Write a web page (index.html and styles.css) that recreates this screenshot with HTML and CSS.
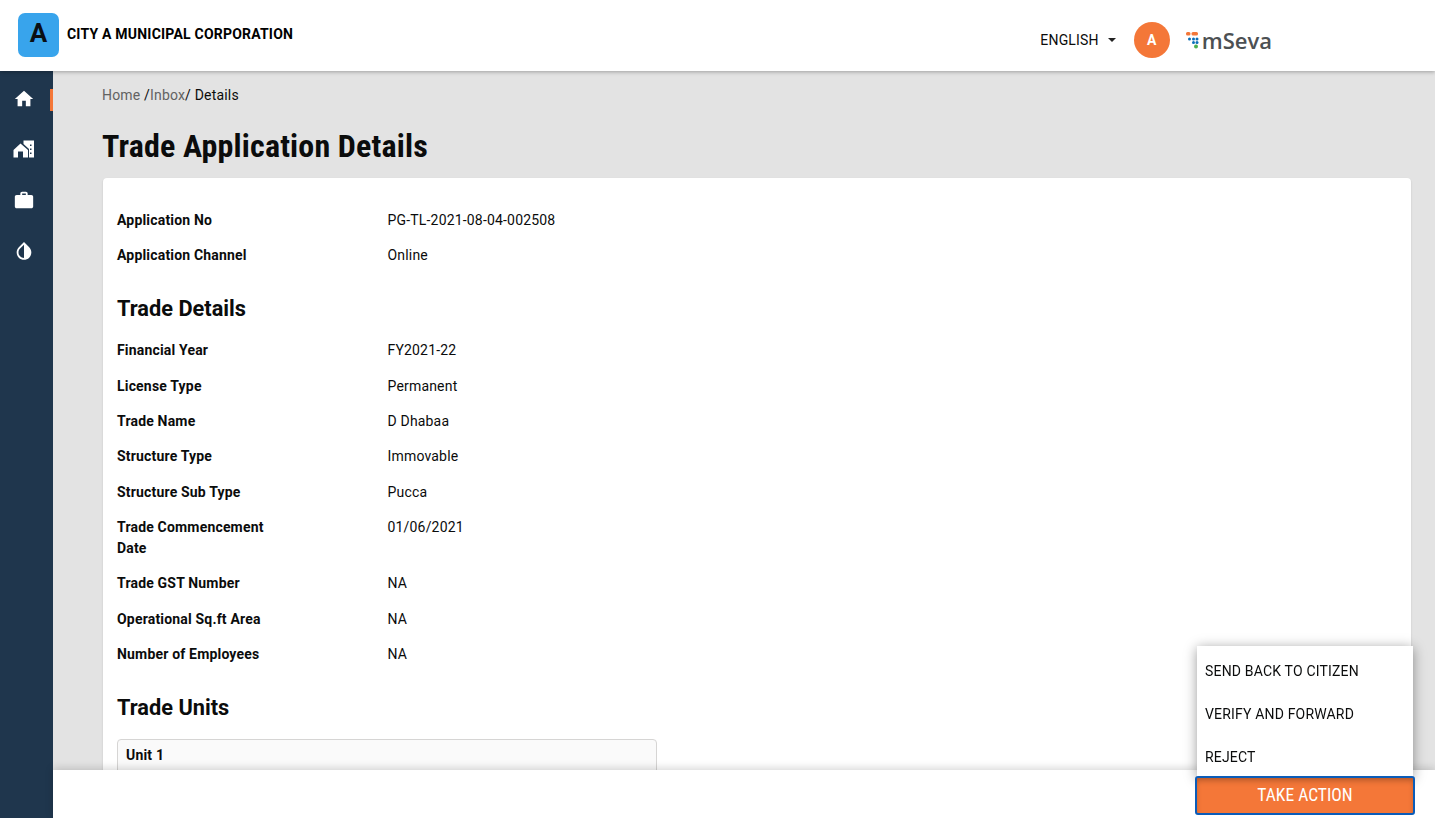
FILE: index.html
```html
<!DOCTYPE html>
<html lang="en">
<head>
<meta charset="utf-8">
<title>Trade Application Details</title>
<link rel="stylesheet" href="styles.css">
</head>
<body>
<header class="topbar">
  <div class="brand">
    <div class="logo">A</div>
    <div class="city">CITY A MUNICIPAL CORPORATION</div>
  </div>
  <div class="top-right">
    <div class="lang">ENGLISH<span class="caret"></span></div>
    <div class="avatar">A</div>
    <div class="mseva">
      <svg class="mseva-mark" viewBox="0 0 14 18" width="14" height="18">
        <rect x="1" y="1" width="4.500" height="3.500" rx="1.500" fill="#f47738"/>
        <rect x="6.500" y="1" width="6.500" height="3.500" rx="1.500" fill="#f47738"/>
        <circle cx="4.500" cy="8" r="1.500" fill="#0b6fb8"/>
        <circle cx="8.500" cy="8" r="1.500" fill="#0b6fb8"/>
        <circle cx="12" cy="8" r="1.500" fill="#0b6fb8"/>
        <circle cx="8.500" cy="11.500" r="1.500" fill="#0b6fb8"/>
        <circle cx="12" cy="11.500" r="1.500" fill="#0b6fb8"/>
        <circle cx="11" cy="15.500" r="2" fill="#4caf50"/>
      </svg>
      <span class="mseva-text">mSeva</span>
    </div>
  </div>
</header>
<div class="shell">
  <nav class="sidebar">
    <div class="nav-item active">
      <svg viewBox="0 0 24 24" width="22" height="22"><path fill="#fff" d="M10 20v-6h4v6h5v-8h3L12 3 2 12h3v8z"/></svg>
    </div>
    <div class="nav-item">
      <svg viewBox="0 0 22 22" width="22" height="22"><path fill="#fff" fill-rule="evenodd" d="M.5 18.500V11L7.500 4.500 15 11v7.500H10V12.500H5V18.500zM10.500 1.500H21V18.500H16V10L10.500 5zM17 5.500h1.500V7H17zM17 9.500h1.500V11H17zM17 13.500h1.500V15H17z"/></svg>
    </div>
    <div class="nav-item">
      <svg viewBox="0 0 24 24" width="22" height="22"><path fill="#fff" d="M20 6.500h-4V5c0-1.100-.9-2-2-2h-4c-1.100 0-2 .9-2 2v1.500H4c-1.100 0-2 .9-2 2V19c0 1.100.9 2 2 2h16c1.100 0 2-.9 2-2V8.500c0-1.100-.9-2-2-2zm-6 0h-4V5h4z"/></svg>
    </div>
    <div class="nav-item">
      <svg viewBox="0 0 24 24" width="22" height="22"><path fill="#fff" d="M17.660 7.930 12 2.270 6.340 7.930c-3.120 3.120-3.120 8.190 0 11.310C7.900 20.800 9.950 21.580 12 21.580c2.050 0 4.100-.78 5.660-2.340 3.120-3.120 3.120-8.190 0-11.310zM12 19.590c-1.600 0-3.110-.62-4.240-1.760C6.620 16.690 6 15.190 6 13.590s.62-3.110 1.760-4.240L12 5.100v14.490z"/></svg>
    </div>
  </nav>
  <main class="content">
    <div class="crumbs"><span class="crumb-link">Home</span> /<span class="crumb-link">Inbox</span>/ Details</div>
    <h1 class="title">Trade Application Details</h1>
    <section class="card">
      <div class="row"><div class="label">Application No</div><div class="value">PG-TL-2021-08-04-002508</div></div>
      <div class="row"><div class="label">Application Channel</div><div class="value">Online</div></div>
      <h2 class="section">Trade Details</h2>
      <div class="row"><div class="label">Financial Year</div><div class="value">FY2021-22</div></div>
      <div class="row"><div class="label">License Type</div><div class="value">Permanent</div></div>
      <div class="row"><div class="label">Trade Name</div><div class="value">D Dhabaa</div></div>
      <div class="row"><div class="label">Structure Type</div><div class="value">Immovable</div></div>
      <div class="row"><div class="label">Structure Sub Type</div><div class="value">Pucca</div></div>
      <div class="row"><div class="label">Trade Commencement Date</div><div class="value">01/06/2021</div></div>
      <div class="row"><div class="label">Trade GST Number</div><div class="value">NA</div></div>
      <div class="row"><div class="label">Operational Sq.ft Area</div><div class="value">NA</div></div>
      <div class="row"><div class="label">Number of Employees</div><div class="value">NA</div></div>
      <h2 class="section units">Trade Units</h2>
      <div class="unit"><div class="unit-title">Unit 1</div></div>
    </section>
  </main>
</div>
<footer class="action-bar">
  <div class="menu">
    <div class="menu-item">SEND BACK TO CITIZEN</div>
    <div class="menu-item">VERIFY AND FORWARD</div>
    <div class="menu-item">REJECT</div>
  </div>
  <button class="take-action">TAKE ACTION</button>
</footer>
</body>
</html>
```
FILE: styles.css
```css
* { box-sizing: border-box; }
html, body { margin: 0; height: 100%; overflow: hidden; }
body { font-family: Roboto, "Liberation Sans", sans-serif; font-size: 14px; letter-spacing: .18px; color: #0b0c0c; background: #e3e3e3; display: flex; flex-direction: column; }

.topbar { height: 71px; flex: none; background: #fff; display: flex; justify-content: space-between; box-shadow: 0 1px 4px rgba(0,0,0,.3); position: relative; z-index: 2; }
.brand { display: flex; align-items: flex-start; padding: 13px 0 0 18px; }
.logo { width: 41px; height: 44px; border-radius: 7px; background: #38a4ec; color: #0a0f14; font-size: 26px; font-weight: 700; padding-bottom: 4px; letter-spacing: 0; display: flex; align-items: center; justify-content: center; }
.city { margin: 12px 0 0 8px; font-size: 14px; line-height: 18px; font-weight: 700; letter-spacing: .21px; color: #000; }
.top-right { display: flex; align-items: center; padding: 9px 163px 0 0; }
.lang { font-size: 14px; display: flex; align-items: center; color: #0b0c0c; }
.caret { margin-left: 9px; border: 4px solid transparent; border-top: 4px solid #222; border-bottom: 0; }
.avatar { margin-left: 18px; width: 36px; height: 36px; border-radius: 50%; background: #f47738; color: #fff; font-size: 14px; font-weight: 700; display: flex; align-items: center; justify-content: center; }
.mseva { margin-left: 15px; display: flex; align-items: center; gap: 3px; }
.mseva-text { font-family: "Open Sans", Roboto, sans-serif; font-size: 22px; line-height: 26px; font-weight: 600; color: #4c5053; letter-spacing: 0; }

.shell { flex: 1; min-height: 0; display: flex; }
.sidebar { width: 53px; flex: none; background: #1f364d; padding-top: 17px; display: flex; flex-direction: column; }
.nav-item { height: 50.500px; position: relative; padding-left: 13px; }
.nav-item.active::after { content: ""; position: absolute; right: 0; top: 1px; width: 3px; height: 22px; background: #f47738; }

.content { flex: 1; min-width: 0; padding: 14px 24px 0 49px; overflow: hidden; }
.crumbs { font-size: 14px; line-height: 20px; color: #0b0c0c; }
.crumb-link { color: #626262; }
.title { margin: 21px 0 12px; font-size: 32px; line-height: 40px; font-weight: 700; font-family: "Roboto Condensed", Roboto, sans-serif; font-stretch: condensed; letter-spacing: .16px; color: #0b0c0c; }
.card { margin-left: 1px; background: #fff; border-radius: 4px; box-shadow: 0 1px 2px rgba(0,0,0,.16); padding: 32px 14px 0; height: 640px; }
.row { display: flex; line-height: 21px; margin-bottom: 14.350px; }
.label { width: 160px; margin-right: 110.500px; font-weight: 700; color: #0b0c0c; }
.value { color: #0b0c0c; }
.section { margin: 28.500px 0 17.500px; font-size: 21.750px; line-height: 28px; font-weight: 700; letter-spacing: 0; color: #0b0c0c; }
.section.units { margin-top: 28.500px; margin-bottom: 17.500px; }
.unit { width: 540px; height: 60px; background: #fafafa; border: 1px solid #d6d5d4; border-radius: 4px; padding: 5px 8px; }
.unit-title { font-size: 14px; line-height: 21px; font-weight: 700; }

.action-bar { position: fixed; left: 53px; right: 0; bottom: 0; height: 48px; background: #fff; box-shadow: 0 -2px 8px rgba(0,0,0,.16); z-index: 3; }
.menu { position: absolute; right: 22px; bottom: 41px; width: 216px; height: 131px; background: #fff; box-shadow: 0 2px 12px rgba(0,0,0,.4); padding-top: 3px; }
.menu-item { height: 43px; padding: 0 8px; display: flex; align-items: center; font-size: 14px; color: #0b0c0c; }
.take-action { position: absolute; right: 20px; bottom: 3px; width: 220px; height: 39px; padding-bottom: 0; background: #f47738; color: #fff; border: 2px solid #0b5cb8; border-radius: 3px; font: 400 17.500px/1 "Roboto Condensed", Roboto, sans-serif; font-stretch: condensed; box-shadow: inset 0 4px 6px -2px rgba(0,0,0,.3); }
```
